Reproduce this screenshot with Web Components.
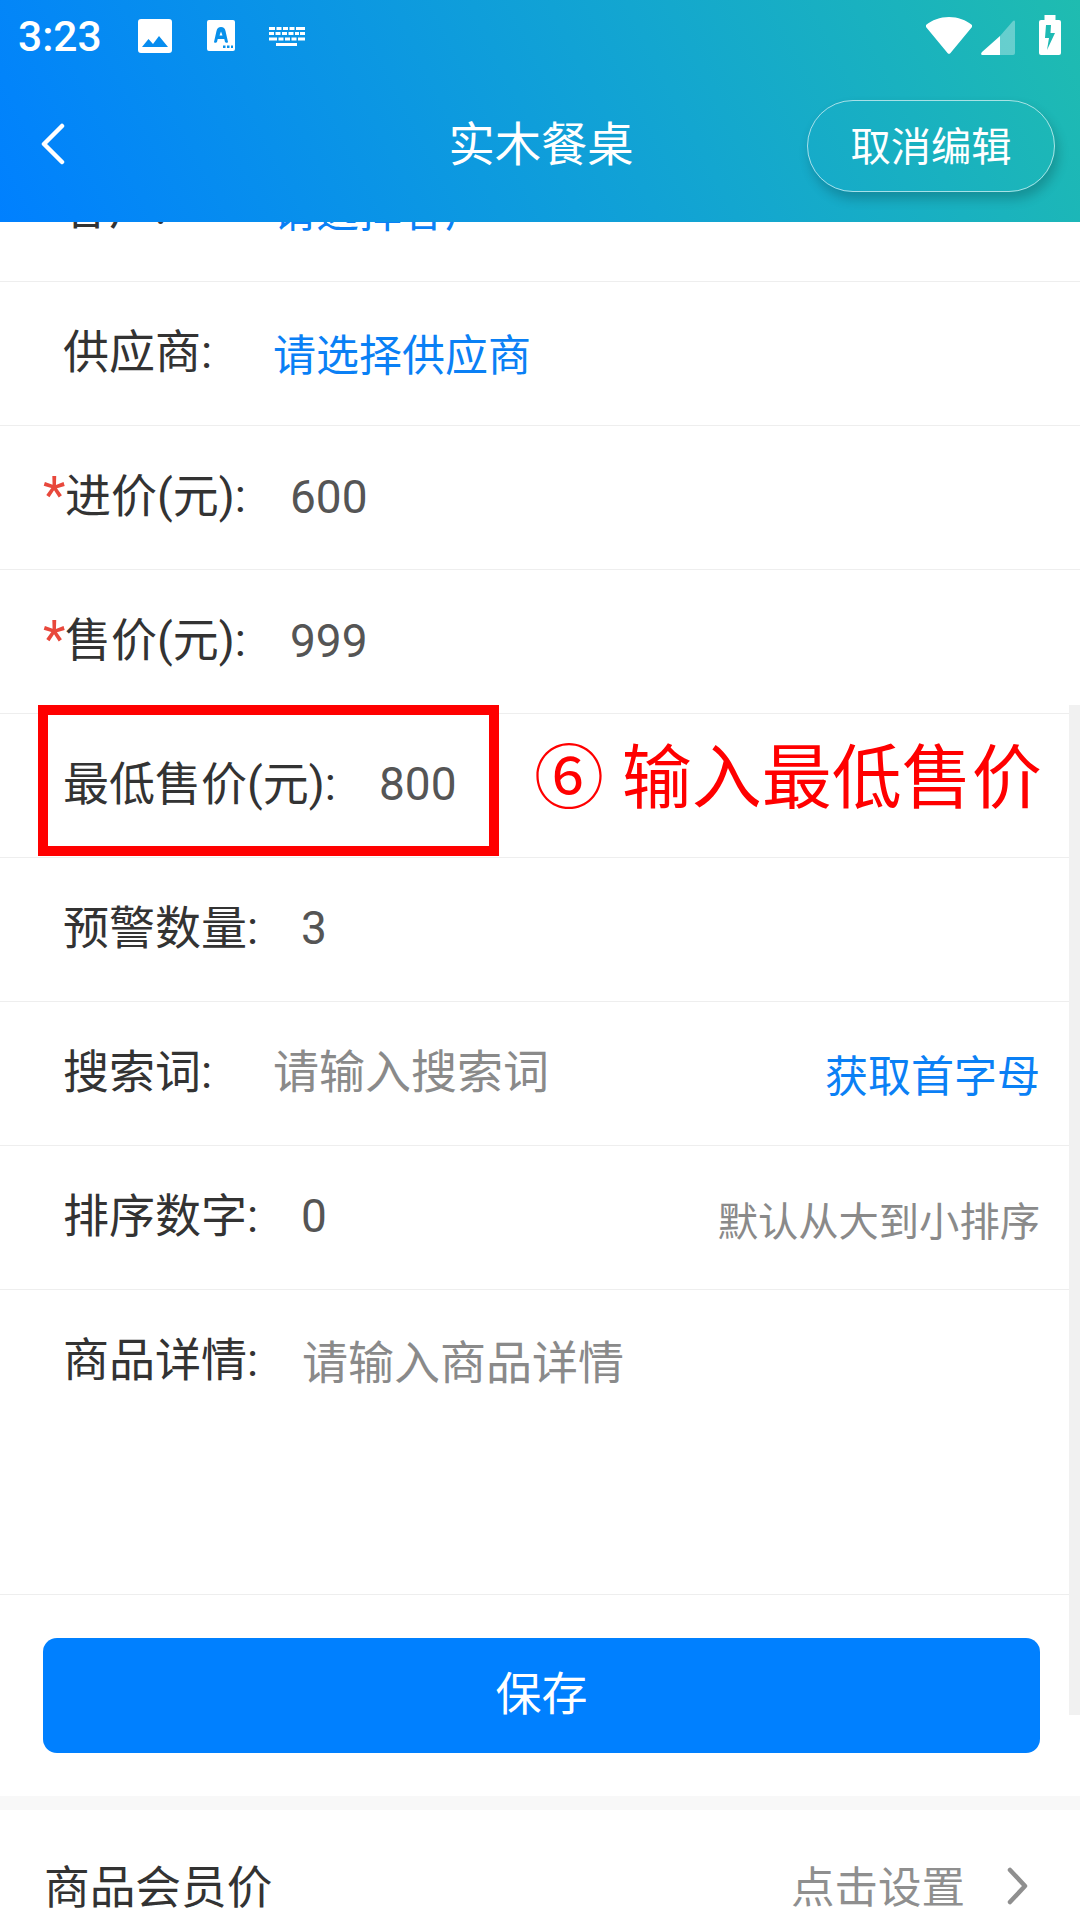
<!DOCTYPE html>
<html lang="zh">
<head>
<meta charset="utf-8">
<title>实木餐桌</title>
<style>
html, body { margin: 0; padding: 0; background: #fff; }
body { width: 1080px; height: 1920px; overflow: hidden; position: relative; font-family: Roboto, "Noto Sans CJK SC", sans-serif; }
</style>
</head>
<body>
<product-page></product-page>

<template id="status-bar-tpl">
  <style>
    :host { display: flex; align-items: flex-start; height: 76px; position: relative; color: #fff; }
    .time { font-size: 42.500px; font-weight: 500; line-height: 40px; margin: 17px 0 0 18px; width: 120px; }
    svg { display: block; fill: #fff; flex: none; }
    .img { margin-top: 19px; }
    .a { margin: 20px 0 0 35px; }
    .kb { margin: 27px 0 0 34px; }
    .right { margin-left: auto; display: flex; }
    .wifi { margin-top: 17px; }
    .sig { margin: 20px 0 0 9px; }
    .bat { margin: 15px 19px 0 24px; }
  </style>
  <span class="time">3:23</span>
  <svg class="img" width="34" height="34" viewBox="0 0 34 34"><path fill-rule="evenodd" d="M3 0h28a3 3 0 0 1 3 3v28a3 3 0 0 1-3 3H3a3 3 0 0 1-3-3V3a3 3 0 0 1 3-3zM4 28l6.500-8 4.500 5 6-8 9 11z"/></svg>
  <svg class="a" width="28" height="31" viewBox="0 0 28 31"><path fill-rule="evenodd" d="M2 0h24a2 2 0 0 1 2 2v27a2 2 0 0 1-2 2H2a2 2 0 0 1-2-2V2a2 2 0 0 1 2-2zM14 7c-2.500 0-4 1.500-4.500 4L7 22c0 1 2.500 1 3 0l.7-3h6.600l.7 3c.5 1 3 1 3 0l-2.500-11c-.5-2.500-2-4-4.500-4zm0 4.500 1.500 4h-3zM16 25.500h2.500v2.500H16zM20 25.500h2.500v2.500H20zM24 25.500h2v2.500h-2z"/></svg>
  <svg class="kb" width="36" height="19" viewBox="0 0 36 19"><path d="M0 0h6v3H0zM7.500 0h5v3h-5zM14 0h5v3h-5zM20.500 0h5v3h-5zM27 0h9v3h-9zM0 5h5v3H0zM6.500 5h5v3h-5zM13 5h5v3h-5zM19.500 5h5v3h-5zM26 5h4v3h-4zM31 5h5v3h-5zM0 10.500h8v3H0zM9.500 10.500h5v3h-5zM16 10.500h5v3h-5zM22.500 10.500h5v3h-5zM29 10.500h7v3h-7zM7 16h21v3H7z"/></svg>
  <div class="right">
    <svg class="wifi" width="46" height="37" viewBox="0 0 46 37"><path d="M0 8C6 3 14 0 23 0s17 3 23 8a1.500 1.500 0 0 1 0 2L24.500 36a2 2 0 0 1-3 0L0 10a1.500 1.500 0 0 1 0-2z"/></svg>
    <svg class="sig" width="34" height="35" viewBox="0 0 34 35"><path opacity=".33" d="M19 16 32 1c1-1 2-.5 2 1v31a2 2 0 0 1-2 2H19z"/><path d="M19 16v19H2c-2 0-2.500-1-1-3z"/></svg>
    <svg class="bat" width="22" height="40" viewBox="0 0 22 40"><path fill-rule="evenodd" d="M5.500 0h11v5H20a2 2 0 0 1 2 2v31a2 2 0 0 1-2 2H2a2 2 0 0 1-2-2V7a2 2 0 0 1 2-2h3.500zM12 10H7l-1 13h4l-2 12 8-17h-4.500z"/></svg>
  </div>
</template>

<template id="app-header-tpl">
  <style>
    :host { display: block; height: 222px; position: relative; z-index: 2; color: #fff; background: linear-gradient(63deg, #0080ff 0%, #13a6d0 62%, #1fbcb0 100%); }
    .nav { height: 146px; display: grid; grid-template-columns: 1fr auto 1fr; align-items: center; }
    .back { margin-left: 40px; display: block; position: relative; top: -5px; }
    .title { font-size: 46.300px; line-height: 60px; position: relative; top: -4px; left: 1px; }
    .cancel { justify-self: end; margin: -6px 25px 0 0; width: 248px; height: 92px; box-sizing: border-box; padding-bottom: 6px; border: 1px solid rgba(255,255,255,.62); border-radius: 46px; box-shadow: 3px 7px 12px rgba(0,0,0,.2); font-size: 40.300px; display: flex; align-items: center; justify-content: center; }
  </style>
  <status-bar></status-bar>
  <div class="nav">
    <svg class="back" width="26" height="42" viewBox="0 0 26 42"><path d="M22 3 4 21l18 18" fill="none" stroke="#fff" stroke-width="4.500" stroke-linecap="round" stroke-linejoin="round"/></svg>
    <span class="title"><slot></slot></span>
    <span class="cancel"><slot name="action"></slot></span>
  </div>
</template>

<template id="form-row-tpl">
  <style>
    :host { display: flex; box-sizing: border-box; height: 144px; padding: 39px 40px 0 43px; border-bottom: 1px solid #eee; font-size: 46px; line-height: 62px; color: #333; align-items: flex-start; }
    .star { width: 20px; color: #e8483c; flex: none; visibility: hidden; font-size: 52px; line-height: 62px; }
    :host([required]) .star { visibility: visible; width: 22px; }
    .label { flex: none; width: var(--label-w, 210px); white-space: nowrap; }
    .value { flex: 1; white-space: nowrap; color: #555; }
    :host([link]) .value { color: #0a80f5; font-size: 43px; position: relative; top: 4px; }
    :host([hint]) .value { color: #8a8a8a; }
    .extra { flex: none; position: relative; }
  </style>
  <span class="star">*</span>
  <span class="label"></span>
  <span class="value"><slot></slot></span>
  <span class="extra"><slot name="extra"></slot></span>
</template>

<template id="save-panel-tpl">
  <style>
    :host { display: block; height: 201px; box-sizing: border-box; padding: 43px 40px 0 43px; }
    .btn { height: 115px; border-radius: 14px; background: #0080ff; color: #fff; font-size: 46px; display: flex; align-items: center; justify-content: center; }
    .btn span { position: relative; top: -6px; }
  </style>
  <div class="btn"><span><slot></slot></span></div>
</template>

<template id="link-row-tpl">
  <style>
    :host { display: flex; align-items: flex-start; box-sizing: border-box; border-top: 14px solid #f8f8f8; height: 124px; padding: 48px 51px 0 44px; }
    .label { font-size: 45.700px; line-height: 62px; color: #333; flex: 1; }
    .hint { font-size: 43.500px; line-height: 62px; color: #8f8f8f; }
    svg { display: block; margin: 9px 0 0 42px; }
  </style>
  <span class="label"><slot></slot></span>
  <span class="hint"><slot name="hint"></slot></span>
  <svg width="22" height="38" viewBox="0 0 22 38"><path d="M3 3l15 16L3 35" fill="none" stroke="#8f8f8f" stroke-width="4.500" stroke-linecap="round" stroke-linejoin="round"/></svg>
</template>

<template id="note-mark-tpl">
  <style>
    :host { display: block; position: absolute; left: 38px; top: 705px; width: 1042px; height: 151px; pointer-events: none; }
    .box { position: absolute; left: 0; top: 0; width: 461px; height: 151px; box-sizing: border-box; border: 10px solid #f00; }
    .text { position: absolute; left: 496px; top: 20px; color: #f00; font-size: 70px; line-height: 96px; word-spacing: 2px; white-space: nowrap; font-family: "Noto Sans CJK SC", sans-serif; }
  </style>
  <div class="box"></div>
  <div class="text"><slot></slot></div>
</template>

<template id="scroll-thumb-tpl">
  <style>
    :host { display: block; position: absolute; left: 1069px; top: 705px; width: 11px; height: 1010px; background: #f1f1f1; }
  </style>
</template>

<template id="product-page-tpl">
  <style>
    :host { display: block; width: 1080px; height: 1920px; position: relative; overflow: hidden; background: #fff; }
    .scroll { height: 1698px; overflow: hidden; }
    .content { margin-top: -84px; }
    .tall { height: 305px; }
    .blue { color: #0a80f5; font-size: 43px; position: relative; top: 4px; }
    .tip { color: #8a8a8a; font-size: 40.300px; position: relative; top: 4px; }
    .low { position: relative; top: 3px; }
    .num { position: relative; top: 1px; }
  </style>
  <app-header>实木餐桌<span slot="action">取消编辑</span></app-header>
  <div class="scroll">
    <div class="content">
      <form-row label="客户:" link>请选择客户</form-row>
      <form-row label="供应商:" link>请选择供应商</form-row>
      <form-row label="进价(元):" required style="--label-w:225px"><span class="num">600</span></form-row>
      <form-row label="售价(元):" required style="--label-w:225px"><span class="num">999</span></form-row>
      <form-row label="最低售价(元):" style="--label-w:316px">800</form-row>
      <form-row label="预警数量:" style="--label-w:238px">3</form-row>
      <form-row label="搜索词:" hint>请输入搜索词<span slot="extra" class="blue">获取首字母</span></form-row>
      <form-row label="排序数字:" style="--label-w:238px">0<span slot="extra" class="tip">默认从大到小排序</span></form-row>
      <form-row class="tall" label="商品详情:" hint style="--label-w:239px"><span class="low">请输入商品详情</span></form-row>
      <save-panel>保存</save-panel>
      <link-row>商品会员价<span slot="hint">点击设置</span></link-row>
    </div>
  </div>
  <scroll-thumb></scroll-thumb>
  <note-mark>⑥ 输入最低售价</note-mark>
</template>

<script>
// each element just clones its template into an open shadow root
class TplElement extends HTMLElement {
	constructor() {
		super()
		let tpl = document.getElementById(this.localName + "-tpl")
		this.attachShadow({mode: "open"}).appendChild(tpl.content.cloneNode(true))
	}
}

class FormRow extends TplElement {
	connectedCallback() {
		this.shadowRoot.querySelector(".label").textContent = this.getAttribute("label")
	}
}

for (const name of ["status-bar", "app-header", "save-panel", "link-row", "note-mark", "scroll-thumb", "product-page"]) {
	customElements.define(name, class extends TplElement {})
}
customElements.define("form-row", FormRow)
</script>
</body>
</html>
